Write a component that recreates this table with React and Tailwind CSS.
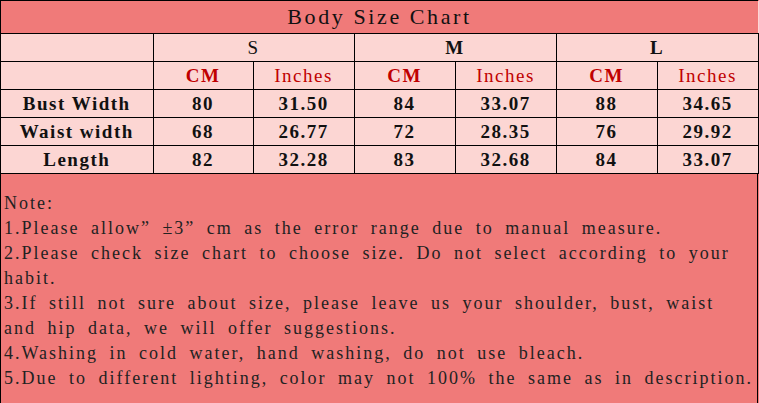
import React from 'react'

const rows = [
    ['Bust Width', '80', '31.50', '84', '33.07', '88', '34.65'],
    ['Waist width', '68', '26.77', '72', '28.35', '76', '29.92'],
    ['Length', '82', '32.28', '83', '32.68', '84', '33.07'],
]

const notes = [
    'Note:',
    '1.Please allow\u201d \u00b13\u201d cm as the error range due to manual measure.',
    '2.Please check size chart to choose size. Do not select according to your',
    'habit.',
    '3.If still not sure about size, please leave us your shoulder, bust, waist',
    'and hip data, we will offer suggestions.',
    '4.Washing in cold water, hand washing, do not use bleach.',
    '5.Due to different lighting, color may not 100% the same as in description.',
]

const cell = 'border border-black h-[28px] p-0 text-center align-middle'

const App = () => {
    return (
        <div className="w-[759px] h-[403px] bg-[#f07a79] font-['Liberation_Serif',serif] text-[#111]">
            <div className="w-[758px] h-full border-l border-r border-t border-black flex flex-col">
                <table className="w-[757px] border-collapse table-fixed bg-[#fcd6d3]">
                    <colgroup>
                        <col className="w-[152px]" />
                        <col className="w-[100px]" />
                        <col className="w-[101px]" />
                        <col className="w-[101px]" />
                        <col className="w-[101px]" />
                        <col className="w-[101px]" />
                        <col className="w-[101px]" />
                    </colgroup>
                    <tbody>
                        <tr>
                            <td colSpan={7} className="border-b border-black h-[32px] p-0 text-center align-middle bg-[#f07a79] text-[22px] leading-none tracking-[2.6px]">
                                Body Size Chart
                            </td>
                        </tr>
                        <tr className="text-[19px] leading-none tracking-[1.5px]">
                            <td className={`${cell} border-l-0`}></td>
                            <td colSpan={2} className={cell}>S</td>
                            <td colSpan={2} className={`${cell} font-bold`}>M</td>
                            <td colSpan={2} className={`${cell} font-bold`}>L</td>
                        </tr>
                        <tr className="text-[19px] leading-none tracking-[1.5px] text-[#c00000]">
                            <td className={`${cell} border-l-0`}></td>
                            <td className={`${cell} font-bold`}>CM</td>
                            <td className={cell}>Inches</td>
                            <td className={`${cell} font-bold`}>CM</td>
                            <td className={cell}>Inches</td>
                            <td className={`${cell} font-bold`}>CM</td>
                            <td className={cell}>Inches</td>
                        </tr>
                        {rows.map((r) => (
                            <tr key={r[0]} className="text-[19px] leading-none tracking-[1.5px] font-bold">
                                {r.map((v, i) => (
                                    <td key={i} className={`${cell} ${i === 0 ? 'border-l-0' : ''}`}>{v}</td>
                                ))}
                            </tr>
                        ))}
                    </tbody>
                </table>
                <div className="pl-[3px] pt-[17px] text-[18px] leading-[25px] tracking-[2px] whitespace-pre text-[#222] [word-spacing:5px]">
                    {notes.map((n) => (
                        <div key={n}>{n}</div>
                    ))}
                </div>
            </div>
        </div>
    )
}

export default App
